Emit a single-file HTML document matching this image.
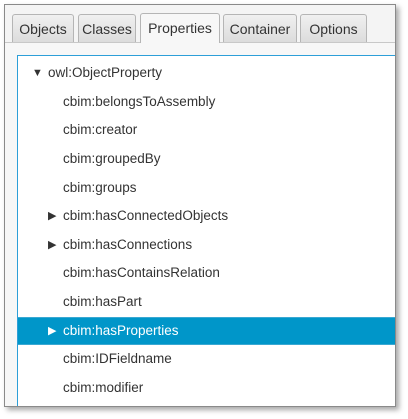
<!DOCTYPE html>
<html><head><style>
html,body{margin:0;width:408px;height:419px;overflow:hidden}
body{background:#fff;position:relative;font-family:"Liberation Sans",sans-serif}
.frame{position:absolute;left:4px;top:4px;width:390px;height:401px;border:1px solid #8a8a8a;background:#f4f4f4;box-shadow:3px 3px 5px rgba(0,0,0,.35);overflow:hidden}
.tab{position:absolute;top:9px;height:28px;border:1px solid #b5b5b5;border-bottom:none;border-radius:3px 3px 0 0;background:linear-gradient(#f0f0f0,#dcdcdc);font-size:14px;color:#333;line-height:28px;text-align:center;box-sizing:border-box}
.pane{position:absolute;left:0;top:37px;right:0;bottom:0;background:#f7f7f7;border-top:1px solid #c8c8c8}
.tree{position:absolute;left:12px;top:50px;right:0;bottom:0;background:#fff;border:1px solid #2d9fd8;border-right:none;border-bottom:none;overflow:hidden}
.row{position:absolute;left:0;width:100%;height:28px;line-height:28px;font-size:13.5px;color:#333}
.row.sel{background:#0096c9;color:#fff;border-top:1px solid #3aa8d2;border-bottom:1px solid #3aa8d2;box-sizing:border-box;line-height:26px}
.arr{position:absolute;font-size:11px}
</style></head><body>
<div class="frame">
<div class="tab" style="left:7px;width:62px">Objects</div>
<div class="tab" style="left:73px;width:58px">Classes</div>
<div class="tab" style="left:135px;width:80px;background:#f7f7f7;top:8px;height:30px;z-index:2">Properties</div>
<div class="tab" style="left:218px;width:74px">Container</div>
<div class="tab" style="left:295px;width:67px">Options</div>
<div class="pane"></div>
<div class="tree">
<div class="row" style="top:3px"><span class="arr" style="left:14px">▼</span><span style="position:absolute;left:30px">owl:ObjectProperty</span></div>
<div class="row" style="top:32px"><span style="position:absolute;left:45px">cbim:belongsToAssembly</span></div>
<div class="row" style="top:60px"><span style="position:absolute;left:45px">cbim:creator</span></div>
<div class="row" style="top:89px"><span style="position:absolute;left:45px">cbim:groupedBy</span></div>
<div class="row" style="top:118px"><span style="position:absolute;left:45px">cbim:groups</span></div>
<div class="row" style="top:146px"><span class="arr" style="left:30px">▶</span><span style="position:absolute;left:45px">cbim:hasConnectedObjects</span></div>
<div class="row" style="top:175px"><span class="arr" style="left:30px">▶</span><span style="position:absolute;left:45px">cbim:hasConnections</span></div>
<div class="row" style="top:203px"><span style="position:absolute;left:45px">cbim:hasContainsRelation</span></div>
<div class="row" style="top:232px"><span style="position:absolute;left:45px">cbim:hasPart</span></div>
<div class="row sel" style="top:261px"><span class="arr" style="left:30px">▶</span><span style="position:absolute;left:45px">cbim:hasProperties</span></div>
<div class="row" style="top:289px"><span style="position:absolute;left:45px">cbim:IDFieldname</span></div>
<div class="row" style="top:318px"><span style="position:absolute;left:45px">cbim:modifier</span></div>
</div>
</div>
</body></html>
